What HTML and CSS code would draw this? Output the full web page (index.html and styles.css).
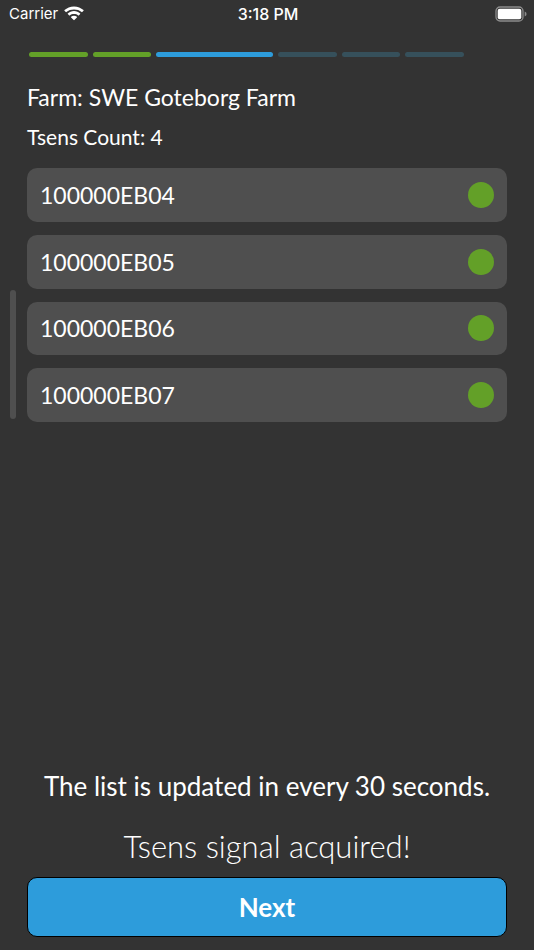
FILE: index.html
```html
<!DOCTYPE html>
<html lang="en">
<head>
  <meta charset="utf-8">
  <meta name="viewport" content="width=device-width, initial-scale=1">
  <title>Tsens setup</title>
  <link rel="stylesheet" href="styles.css">
</head>
<body>
  <div class="screen">
    <header class="status-bar">
      <div class="carrier">
        <span>Carrier</span>
        <svg class="wifi" viewBox="0 0 20 15" width="20" height="15" aria-hidden="true">
          <path d="M10 0.4C6.200 0.400 2.900 1.800 0.500 4.100Q0.200 4.400 0.500 4.700L1.800 6Q2.100 6.300 2.400 6C4.400 4.100 7.100 3.400 10 3.400S15.600 4.100 17.600 6Q17.900 6.300 18.200 6L19.500 4.700Q19.800 4.400 19.500 4.100C17.100 1.800 13.800 0.400 10 0.400Z"/>
          <path d="M10 5.100C7.600 5.100 5.400 6 3.800 7.500Q3.500 7.800 3.800 8.100L5.200 9.500Q5.500 9.700 5.800 9.500C6.900 8.500 8.400 8.100 10 8.100S13.100 8.500 14.200 9.500Q14.500 9.700 14.800 9.500L16.200 8.100Q16.500 7.800 16.200 7.500C14.600 6 12.400 5.100 10 5.100Z"/>
          <path d="M10 9.700C8.900 9.700 7.900 10.100 7.100 10.800Q6.800 11.100 7.100 11.400L9.700 14Q10 14.300 10.300 14L12.900 11.400Q13.200 11.100 12.900 10.800C12.100 10.100 11.100 9.700 10 9.700Z"/>
        </svg>
      </div>
      <time class="clock">3:18 PM</time>
      <svg class="battery" viewBox="0 0 32 16" width="32" height="16" aria-hidden="true">
        <rect class="battery-case" x="1" y="1" width="27" height="14" rx="4"/>
        <rect class="battery-level" x="2.700" y="2.700" width="23.600" height="10.600" rx="2"/>
        <path class="battery-cap" d="M29.700 5.500Q31.600 6.300 31.600 8T29.700 10.500Z"/>
      </svg>
    </header>

    <div class="steps" aria-label="Step 3 of 6">
      <span class="step done"></span>
      <span class="step done"></span>
      <span class="step current"></span>
      <span class="step"></span>
      <span class="step"></span>
      <span class="step"></span>
    </div>

    <main class="content">
      <h1 class="farm">Farm: SWE Goteborg Farm</h1>
      <p class="count">Tsens Count: 4</p>
      <div class="list-area">
        <ul class="list">
          <li class="card"><span>100000EB04</span><i class="dot"></i></li>
          <li class="card"><span>100000EB05</span><i class="dot"></i></li>
          <li class="card"><span>100000EB06</span><i class="dot"></i></li>
          <li class="card"><span>100000EB07</span><i class="dot"></i></li>
        </ul>
        <div class="scroll-thumb"></div>
      </div>
    </main>

    <footer class="footer">
      <p class="hint">The list is updated in every 30 seconds.</p>
      <p class="signal">Tsens signal acquired!</p>
      <button class="next" type="button">Next</button>
    </footer>
  </div>
</body>
</html>
```
FILE: styles.css
```css
* {
  box-sizing: border-box;
}

body {
  margin: 0;
  background: #333333;
  color: #ffffff;
  font-family: Lato, sans-serif;
}

h1,
p,
ul {
  margin: 0;
  padding: 0;
  font-weight: 400;
}

.screen {
  display: flex;
  flex-direction: column;
  min-height: 100vh;
}

.status-bar {
  display: grid;
  grid-template-columns: 1fr auto 1fr;
  align-items: center;
  height: 27px;
  padding: 0 7px 0 9px;
  font-family: Inter, sans-serif;
  font-size: 15px;
  line-height: 20px;
}

.carrier {
  display: flex;
  align-items: center;
  gap: 6px;
}

.wifi {
  fill: #ffffff;
}

.clock {
  font-size: 16px;
  font-weight: 500;
}

.battery {
  justify-self: end;
}

.battery-case {
  fill: none;
  stroke: #8c8c8c;
  stroke-width: 1.3;
}

.battery-level {
  fill: #ffffff;
}

.battery-cap {
  fill: #8c8c8c;
}

.steps {
  display: flex;
  gap: 5px;
  margin: 25px 70px 0 29px;
}

.step {
  flex: 1 1 0;
  height: 5px;
  border-radius: 3px;
  background: #36505b;
}

.step.done {
  background: #63a028;
}

.step.current {
  flex-grow: 2;
  background: #2d9cdb;
}

.content {
  flex: 1;
  padding: 24px 27px 0;
}

.farm {
  font-size: 23px;
  line-height: 32px;
}

.count {
  margin-top: 8px;
  font-size: 21px;
  line-height: 32px;
}

.list-area {
  position: relative;
  margin-top: 15px;
}

.list {
  display: grid;
  grid-auto-rows: 1fr;
  gap: 13px;
  min-height: 254px;
  list-style: none;
}

.card {
  display: flex;
  align-items: center;
  justify-content: space-between;
  padding: 12px 13px;
  border-radius: 10px;
  background: #4f4f4f;
  font-size: 23px;
  line-height: 28px;
}

.dot {
  width: 26px;
  height: 26px;
  border-radius: 50%;
  background: #63a028;
}

.scroll-thumb {
  position: absolute;
  left: -17px;
  bottom: 3px;
  width: 6px;
  height: 129px;
  border-radius: 3px;
  background: #4f4f4f;
}

.footer {
  padding: 0 27px 13px;
  text-align: center;
}

.hint {
  font-size: 26px;
  line-height: 36px;
}

.signal {
  margin-top: 20px;
  font-size: 31px;
  font-weight: 300;
  line-height: 44px;
}

.next {
  display: block;
  width: 100%;
  margin-top: 9px;
  padding: 12px;
  border: 1px solid #000000;
  border-radius: 10px;
  background: #2d9cdb;
  color: #ffffff;
  font-family: inherit;
  font-size: 26px;
  font-weight: 700;
  line-height: 34px;
}
```
